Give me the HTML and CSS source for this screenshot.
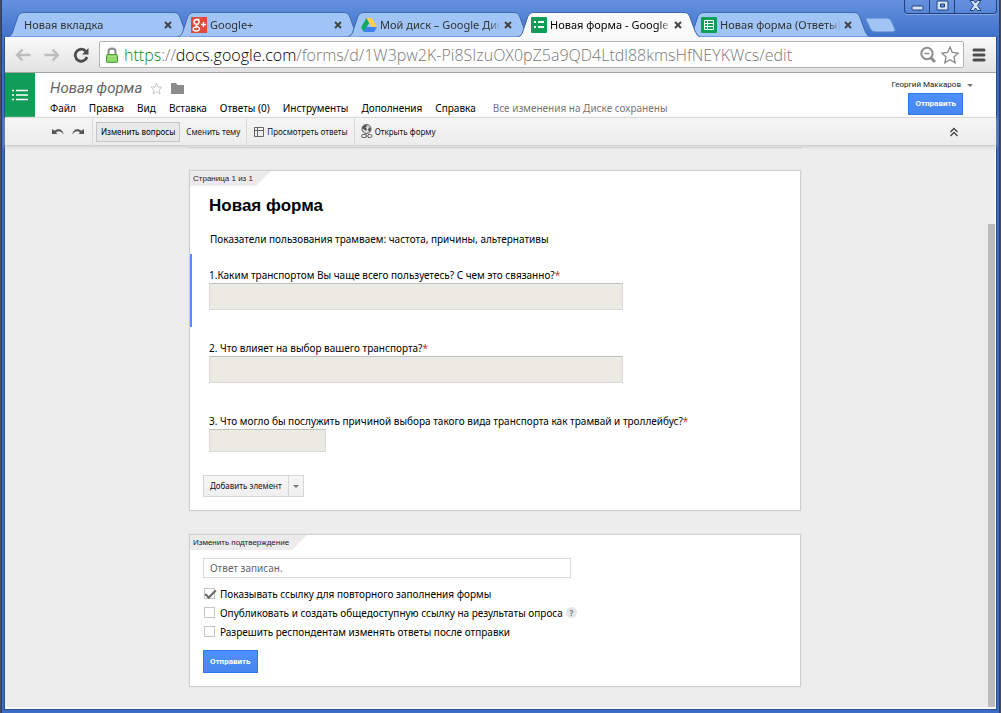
FILE: index.html
```html
<!DOCTYPE html>
<html lang="ru">
<head>
<meta charset="utf-8">
<title>Новая форма - Google Формы</title>
<link rel="stylesheet" href="styles.css">
</head>
<body>
<div class="window">
  <div class="tabstrip">
    <div class="tab tab-plain">
      <svg class="tab-shape" viewBox="0 0 182 25" preserveAspectRatio="none"><path d="M0 24.500C3 24 4 22 5 19L10 4Q11.500 .5 15 .5H167Q170 .5 171.500 4L177 19Q179 24 182 24.500"/></svg>
      <button class="tab-title">Новая вкладка</button>
      <button class="tab-close" aria-label="Закрыть"><svg viewBox="0 0 8 8"><path d="M1 1L7 7M7 1L1 7"/></svg></button>
    </div>
    <div class="tab">
      <svg class="tab-shape" viewBox="0 0 182 25" preserveAspectRatio="none"><path d="M0 24.500C3 24 4 22 5 19L10 4Q11.500 .5 15 .5H167Q170 .5 171.500 4L177 19Q179 24 182 24.500"/></svg>
      <svg class="favicon" viewBox="0 0 16 16"><rect width="16" height="16" fill="#dd4b39"/><path d="M8.500 2.500H5.800C3.800 2.500 3 3.800 3 5S4 7.300 5.700 7.300 8 6.200 8 5 7.300 2.600 6 2.600M5.500 7.500C4.700 8.300 5 8.700 6.200 9.400 8 10.400 8.700 11 8.500 12.200 8.200 13.600 6.700 14 5.200 14 3.500 14 2.200 13.400 2.200 12 2.200 10.500 4 9.800 6.300 9.900" fill="none" stroke="#fff" stroke-width="1.500"/><path d="M10 7.500H15M12.500 5V10" stroke="#fff" stroke-width="1.400"/></svg>
      <button class="tab-title">Google+</button>
      <button class="tab-close" aria-label="Закрыть"><svg viewBox="0 0 8 8"><path d="M1 1L7 7M7 1L1 7"/></svg></button>
    </div>
    <div class="tab">
      <svg class="tab-shape" viewBox="0 0 182 25" preserveAspectRatio="none"><path d="M0 24.500C3 24 4 22 5 19L10 4Q11.500 .5 15 .5H167Q170 .5 171.500 4L177 19Q179 24 182 24.500"/></svg>
      <svg class="favicon" viewBox="0 0 16 16"><path d="M5.500 1L0 10.500 2.800 15 8.200 5.700Z" fill="#11a861"/><path d="M5.500 1H10.700L16 10H10.700Z" fill="#ffcf48"/><path d="M5.300 10H16L13.200 15H2.700Z" fill="#3d82f0"/></svg>
      <button class="tab-title">Мой диск – Google Дис</button>
      <button class="tab-close" aria-label="Закрыть"><svg viewBox="0 0 8 8"><path d="M1 1L7 7M7 1L1 7"/></svg></button>
    </div>
    <div class="tab tab-active">
      <svg class="tab-shape" viewBox="0 0 182 25" preserveAspectRatio="none"><path d="M0 25C3 24 4 22 5 19L10 4Q11.500 .5 15 .5H167Q170 .5 171.500 4L177 19Q179 24 182 25"/></svg>
      <svg class="favicon" viewBox="0 0 16 16"><rect width="16" height="16" rx="1" fill="#109d58"/><path d="M3 5H5M3 10H5M7 5H13M7 10H13" stroke="#fff" stroke-width="2"/></svg>
      <button class="tab-title">Новая форма - Google</button>
      <button class="tab-close" aria-label="Закрыть"><svg viewBox="0 0 8 8"><path d="M1 1L7 7M7 1L1 7"/></svg></button>
    </div>
    <div class="tab">
      <svg class="tab-shape" viewBox="0 0 182 25" preserveAspectRatio="none"><path d="M0 24.500C3 24 4 22 5 19L10 4Q11.500 .5 15 .5H167Q170 .5 171.500 4L177 19Q179 24 182 24.500"/></svg>
      <svg class="favicon" viewBox="0 0 16 16"><rect width="16" height="16" rx="1" fill="#109d58"/><path d="M3.500 3.500H12.500V12.500H3.500ZM3.500 6.500H12.500M3.500 9.500H12.500M6.500 3.500V12.500" fill="none" stroke="#fff"/></svg>
      <button class="tab-title">Новая форма (Ответы)</button>
      <button class="tab-close" aria-label="Закрыть"><svg viewBox="0 0 8 8"><path d="M1 1L7 7M7 1L1 7"/></svg></button>
    </div>
    <button class="new-tab" aria-label="Новая вкладка"><svg viewBox="0 0 32 16"><path d="M2 1H22Q25 1 26.500 4L30 12Q31 15 28 15H10Q7 15 5.500 12L1 3Q.5 1 2 1Z" fill="#9fc4f5" stroke="#5480cb"/></svg></button>
    <div class="window-controls">
      <button aria-label="Свернуть"><svg viewBox="0 0 13 13"><rect x="1" y="6" width="11" height="4" rx="1" fill="#d4e4fb" stroke="#23407c"/></svg></button>
      <button aria-label="Развернуть"><svg viewBox="0 0 13 13"><path d="M1 1H12V10H1ZM4.500 4V7H8.500V4Z" fill="#d4e4fb" fill-rule="evenodd" stroke="#23407c"/></svg></button>
      <button class="wide" aria-label="Закрыть окно"><svg viewBox="0 0 13 13"><path d="M1 .5H4.500L6.500 3 8.500 .5H12L8.500 5.500 12 10.500H8.500L6.500 8 4.500 10.500H1L4.500 5.500Z" fill="#d4e4fb" stroke="#23407c"/></svg></button>
    </div>
  </div>

  <div class="browser">
    <div class="navbar">
      <button class="nav-button" aria-label="Назад"><svg viewBox="0 0 16 16"><path d="M1.500 8H15.500M7.500 2.500L2 8 7.500 13.500" fill="none" stroke="#bdbdbd" stroke-width="2.400"/></svg></button>
      <button class="nav-button" aria-label="Вперёд"><svg viewBox="0 0 16 16"><path d="M14.500 8H.5M8.500 2.500L14 8 8.500 13.500" fill="none" stroke="#bdbdbd" stroke-width="2.400"/></svg></button>
      <button class="nav-button" aria-label="Обновить"><svg viewBox="0 0 16 16"><path d="M13 4.500A6 6 0 1 0 14 10" fill="none" stroke="#4d4d4d" stroke-width="2.800"/><path d="M15.500 1V7.500H9Z" fill="#4d4d4d"/></svg></button>
      <div class="omnibox">
        <svg class="lock" viewBox="0 0 12 16"><path d="M2.500 8V4.500Q2.500 1.500 6 1.500T9.500 4.500V8" fill="none" stroke="#8b8b8b" stroke-width="2"/><rect x=".5" y="7.500" width="11" height="8" rx="1" fill="#8bd568" stroke="#4f9d35"/><path d="M2 9.500H10M2 12H10" stroke="#a9e48c"/></svg>
        <a class="url" href="#"><span class="url-scheme">https</span>://<span class="url-host">docs.google.com</span>/forms/d/1W3pw2K-Pi8SIzuOX0pZ5a9QD4Ltdl88kmsHfNEYKWcs/edit</a>
        <svg class="omni-icon" viewBox="0 0 18 18"><circle cx="8" cy="7.500" r="5.700" fill="none" stroke="#8e8e8e" stroke-width="2"/><path d="M5.500 7.500H10.500" stroke="#8e8e8e" stroke-width="1.500"/><path d="M12 12L16 16" stroke="#8e8e8e" stroke-width="3"/></svg>
        <svg class="omni-icon" viewBox="0 0 18 18"><path d="M9 1L11.400 6.500 17.300 7 12.900 11 14.200 16.800 9 13.700 3.800 16.800 5.100 11 .7 7 6.600 6.500Z" fill="#fff" stroke="#8a8a8a" stroke-width="1.300"/></svg>
      </div>
      <button class="nav-button" aria-label="Меню"><svg viewBox="0 0 16 16"><path d="M3 3H13M3 8H13M3 13H13" stroke="#4d4d4d" stroke-width="3" stroke-linecap="round"/></svg></button>
    </div>

    <header class="header">
      <a class="logo" href="#" aria-label="Формы"><svg viewBox="0 0 18 14"><path d="M1 2.500H3M1 7H3M1 11.500H3M5 2.500H17M5 7H17M5 11.500H17" stroke="#fff" stroke-width="1.300"/></svg></a>
      <div class="heading">
        <div class="title-row">
          <h1 class="doc-title">Новая форма</h1>
          <svg class="title-icon" viewBox="0 0 13 13"><path d="M6.500 1L8 5 12 5.200 9 7.800 10 12 6.500 9.600 3 12 4 7.800 1 5.200 5 5Z" fill="none" stroke="#c9c9c9"/></svg>
          <svg class="title-icon" viewBox="0 0 13 13"><path d="M0 1H5L6.500 3H13V12H0Z" fill="#8b8b8b"/></svg>
        </div>
        <nav class="menu">
          <button>Файл</button><button>Правка</button><button>Вид</button><button>Вставка</button><button>Ответы (0)</button><button>Инструменты</button><button>Дополнения</button><button>Справка</button><span class="saved">Все изменения на Диске сохранены</span>
        </nav>
      </div>
      <div class="account">
        <button class="user">Георгий Маккаров <span class="caret"></span></button>
        <button class="primary">Отправить</button>
      </div>
    </header>

    <div class="toolbar">
      <div class="tool-group history">
        <button class="tool" aria-label="Отменить"><svg viewBox="0 0 12 10"><path d="M0 2V7H5.500L4 5.500C6 3.500 9.500 4 11.500 7.500 11.500 2.500 6 .5 2.500 3.800Z" fill="#555"/></svg></button>
        <button class="tool" aria-label="Повторить"><svg viewBox="0 0 12 10"><path d="M12 2V7H6.500L8 5.500C6 3.500 2.500 4 .5 7.500 .5 2.500 6 .5 9.500 3.800Z" fill="#555"/></svg></button>
      </div>
      <div class="tool-group modes">
        <button class="tool pressed">Изменить вопросы</button>
        <button class="tool theme">Сменить тему</button>
      </div>
      <div class="tool-group">
        <button class="tool with-icon"><svg viewBox="0 0 12 12"><path d="M1.500 1.500H10.500V10.500H1.500ZM1.500 4.500H10.500M4.500 1.500V10.500" fill="none" stroke="#666"/></svg>Просмотреть ответы</button>
      </div>
      <div class="tool-group">
        <button class="tool with-icon"><svg class="tall" viewBox="0 0 12 15"><circle cx="5.500" cy="5" r="4.500" fill="#ddd" stroke="#555"/><path d="M2 2Q5 0 6.500 2L4.500 3.500 6 5 5 7 3 5.500 1 4ZM8 3L10 5 8.500 8 7 6Z" fill="#555"/><path d="M2 10.500H4.500Q6 10.500 6 12T4.500 13.500H2Q.5 13.500 .5 12T2 10.500ZM7 10.500H9.500Q11 10.500 11 12T9.500 13.500H7M4 12H8" fill="none" stroke="#666"/></svg>Открыть форму</button>
      </div>
      <button class="collapse" aria-label="Скрыть меню"><svg viewBox="0 0 10 10"><path d="M1.500 5L5 1.500 8.500 5M1.500 9L5 5.500 8.500 9" fill="none" stroke="#444" stroke-width="1.300"/></svg></button>
    </div>

    <div class="page">
      <main class="content">
        <div class="card card-above"></div>
        <section class="card">
          <div class="tag">Страница 1 из 1</div>
          <h2 class="form-title">Новая форма</h2>
          <p class="description">Показатели пользования трамваем: частота, причины, альтернативы</p>
          <div class="question selected">
            <label for="q1">1.Каким транспортом Вы чаще всего пользуетесь? С чем это связанно?<span class="required">*</span></label>
            <input class="answer" id="q1" type="text" disabled>
          </div>
          <div class="question">
            <label for="q2">2. Что влияет на выбор вашего транспорта?<span class="required">*</span></label>
            <input class="answer" id="q2" type="text" disabled>
          </div>
          <div class="question">
            <label for="q3">3. Что могло бы послужить причиной выбора такого вида транспорта как трамвай и троллейбус?<span class="required">*</span></label>
            <input class="answer short" id="q3" type="text" disabled>
          </div>
          <div class="add">
            <button class="add-main">Добавить элемент</button><button class="add-more" aria-label="Другие элементы"><span class="caret"></span></button>
          </div>
        </section>

        <section class="card confirm">
          <div class="tag">Изменить подтверждение</div>
          <div class="confirm-body">
            <input class="message" type="text" value="Ответ записан." aria-label="Текст подтверждения">
            <label class="option"><input type="checkbox" checked>Показывать ссылку для повторного заполнения формы</label>
            <div class="option-row"><label class="option"><input type="checkbox">Опубликовать и создать общедоступную ссылку на результаты опроса</label><button class="help">?</button></div>
            <label class="option"><input type="checkbox">Разрешить респондентам изменять ответы после отправки</label>
            <button class="primary send">Отправить</button>
          </div>
        </section>
      </main>
      <div class="scrollbar"><div class="thumb"></div></div>
    </div>
  </div>
</div>
</body>
</html>
```
FILE: styles.css
```css
* { box-sizing: border-box; }

body {
  margin: 0;
  font-family: "Noto Sans", sans-serif;
  font-size: 10px;
  line-height: 14px;
  color: #000;
}

h1, h2, p { margin: 0; font-weight: normal; }

button {
  margin: 0;
  padding: 0;
  border: 0;
  background: none;
  font: inherit;
  color: inherit;
  white-space: nowrap;
}

svg { display: block; flex: none; }

.window {
  display: flex;
  flex-direction: column;
  min-height: 100vh;
  padding: 0 3px 3px;
  border: 1px solid #484c58;
  border-top: 0;
  background: linear-gradient(#6592df 0, #4273cb 36px, #3d6cc2 60px);
  box-shadow: inset 1px 0 #23407c, inset -1px 0 #23407c;
}

/* Browser tabs */
.tabstrip {
  display: flex;
  padding-left: 4px;
}

.tab {
  position: relative;
  display: flex;
  align-items: center;
  flex: 0 1 182px;
  min-width: 0;
  height: 25px;
  margin: 12px -12px 0 0;
  padding: 0 18px 0 13px;
}

.tab-plain { padding-left: 16px; }

.tab-active { z-index: 1; }

.tab-shape {
  position: absolute;
  inset: 0;
  width: 100%;
  height: 100%;
  fill: #9fc4f5;
  stroke: #3f69ae;
}

.tab-active .tab-shape { fill: #fafafa; }

.favicon {
  position: relative;
  width: 16px;
  height: 16px;
  margin-right: 3px;
}

.tab-title {
  position: relative;
  flex: 1;
  min-width: 0;
  overflow: hidden;
  text-align: left;
  font-family: "Noto Sans", sans-serif;
  font-size: 11px;
  line-height: 16px;
  color: #333;
  mask-image: linear-gradient(to left, transparent, #000 12px);
}

.tab-active .tab-title { color: #000; }

.tab-close {
  position: relative;
  margin-left: 3px;
}

.tab-close svg {
  width: 8px;
  height: 8px;
  stroke: #444;
  stroke-width: 2;
}

.new-tab {
  align-self: flex-start;
  margin: 17px 0 0 7px;
}

.new-tab svg { width: 32px; height: 16px; }

.window-controls {
  display: flex;
  align-self: flex-start;
  margin-left: auto;
  height: 14px;
  border: 1px solid #23407c;
  border-top: 0;
  border-radius: 0 0 4px 4px;
  box-shadow: 0 1px #82a7e8;
}

.window-controls button {
  display: flex;
  justify-content: center;
  width: 25px;
  border-right: 1px solid #23407c;
}

.window-controls .wide { width: 41px; border: 0; }
.window-controls svg { width: 13px; height: 13px; }

/* Address bar */
.browser {
  display: flex;
  flex-direction: column;
  flex: 1;
  border: 1px solid #2b4f95;
  border-top: 0;
}

.navbar {
  display: flex;
  align-items: center;
  gap: 13px;
  height: 36px;
  padding: 0 9px 0 10px;
  border-bottom: 1px solid #a3a3a3;
  background: linear-gradient(#fafafa, #e2e2e2);
}

.nav-button svg { width: 16px; height: 16px; }

.omnibox {
  display: flex;
  align-items: center;
  gap: 4px;
  flex: 1;
  min-width: 0;
  height: 27px;
  margin: 0 -6px 0 -3px;
  padding: 0 4px 0 6px;
  border: 1px solid #b3b3b3;
  border-radius: 2px;
  background: #fff;
}

.lock { width: 12px; height: 16px; }

.url {
  flex: 1;
  min-width: 0;
  overflow: hidden;
  margin-left: 2px;
  font-family: "Open Sans", sans-serif;
  font-weight: 300;
  font-size: 16px;
  line-height: 24px;
  white-space: nowrap;
  text-decoration: none;
  color: #777;
}

.url-scheme { color: #0a8a0a; }
.url-host { color: #000; }
.omni-icon { width: 18px; height: 18px; }

/* Document header */
.header {
  display: flex;
  background: #fff;
}

.logo {
  display: flex;
  align-items: center;
  justify-content: center;
  width: 30px;
  background: #109d58;
}

.logo svg { width: 18px; height: 14px; }

.heading {
  flex: 1;
  padding: 6px 0 2px 15px;
}

.title-row {
  display: flex;
  align-items: center;
  gap: 8px;
  height: 18px;
}

.doc-title {
  font-family: Roboto, sans-serif;
  font-size: 15px;
  line-height: 18px;
  font-style: italic;
  color: #666;
}

.title-icon { width: 13px; height: 13px; }

.menu {
  display: flex;
  gap: 13px;
  height: 18px;
  align-items: flex-end;
}

.saved { margin-left: 4px; color: #777; }

.account {
  display: flex;
  flex-direction: column;
  align-items: flex-end;
  gap: 1px;
  padding: 5px 23px 2px 0;
}

.user {
  display: flex;
  align-items: center;
  gap: 6px;
  font-family: Roboto, sans-serif;
  font-size: 8px;
  color: #222;
}

.caret {
  border: 3px solid transparent;
  border-top-color: #777;
  border-bottom: 0;
}

.primary {
  height: 22px;
  margin-right: 10px;
  padding: 0 6px;
  border: 1px solid #3079ed;
  background: linear-gradient(#4d90fe, #4787ed);
  font-family: Roboto, sans-serif;
  font-size: 8px;
  font-weight: bold;
  color: #fff;
}

/* Form toolbar */
.toolbar {
  position: relative;
  display: flex;
  height: 29px;
  border-top: 1px solid #dadada;
  border-bottom: 1px solid #d2d2d2;
  background: linear-gradient(#f5f5f5, #ececec);
  box-shadow: 0 1px 3px #d0d0d0;
  font-size: 8px;
  color: #111;
}

.tool-group {
  display: flex;
  align-items: center;
  border-right: 1px solid #d9d9d9;
}

.tool-group:nth-of-type(4) { border-right: 0; }

.history {
  gap: 8px;
  padding: 0 8px 0 47px;
}

.history svg { width: 12px; height: 10px; }

.modes { padding-left: 3px; }

.tool { height: 20px; }

.pressed {
  padding: 0 4px;
  border: 1px solid #c6c6c6;
  background: #e8e8e8;
  color: #000;
}

.theme { padding: 0 6px; }

.with-icon {
  display: flex;
  align-items: center;
  gap: 2px;
  padding: 0 6px;
}

.with-icon svg { width: 12px; height: 12px; }
.with-icon .tall { height: 15px; }

.collapse { margin: 0 37px 0 auto; }
.collapse svg { width: 10px; height: 10px; }

/* Form editor */
.page {
  display: flex;
  flex: 1;
  border-right: 1px solid #f8f8f8;
  border-bottom: 2px solid #f8f8f8;
  background: #ededed;
}

.content {
  flex: 1;
  padding: 0 3px 20px 0;
}

.scrollbar {
  display: flex;
  width: 7px;
  padding-top: 78px;
}

.thumb { flex: 1; background: #bcbcbc; }

.card {
  max-width: 612px;
  margin: 0 auto 23px;
  border: 1px solid #cfcfcf;
  background: #fff;
  box-shadow: 0 0 2px #dcdcdc;
}

.card-above {
  height: 2px;
  margin-bottom: 22px;
  border-top: 0;
}

.confirm { margin-bottom: 0; }

.tag {
  width: fit-content;
  height: 15px;
  padding: 0 18px 0 3px;
  background: #ebebeb;
  clip-path: polygon(0 0, 100% 0, calc(100% - 15px) 100%, 0 100%);
  font-family: "Liberation Sans", Arial, sans-serif;
  font-size: 8px;
  line-height: 16px;
  color: #222;
}

.form-title {
  margin-top: 10px;
  padding: 0 19px;
  font-family: "Liberation Sans", Arial, sans-serif;
  font-size: 17px;
  line-height: 20px;
  font-weight: bold;
}

.description {
  padding: 16px 20px 8px;
}

.question {
  min-height: 73px;
  padding: 14px 19px 0 17px;
  border-left: 2px solid transparent;
}

.selected { border-left-color: #4d90fe; }

.question label { display: block; line-height: 15px; }

.required { color: #c43b1d; }

.answer {
  display: block;
  width: 100%;
  max-width: 414px;
  height: 27px;
  border: 1px solid #d9d9d9;
  border-top-color: #c0c0c0;
  background: #ebebe4;
}

.short { max-width: 117px; height: 23px; }

.add {
  display: flex;
  width: fit-content;
  height: 22px;
  margin: 2px 13px 13px;
  border: 1px solid #d6d6d6;
  background: linear-gradient(#f6f6f6, #efefef);
  font-size: 8px;
  color: #111;
}

.add-main { padding: 0 6px; }

.add-more {
  display: flex;
  align-items: center;
  justify-content: center;
  width: 15px;
  border-left: 1px solid #d6d6d6;
}

.confirm-body {
  display: flex;
  flex-direction: column;
  align-items: flex-start;
  padding: 8px 13px 13px;
}

.message {
  width: 100%;
  max-width: 368px;
  height: 20px;
  margin-bottom: 6px;
  padding: 0 6px;
  border: 1px solid #d9d9d9;
  font: inherit;
  color: #666;
}

.option, .option-row {
  display: flex;
  align-items: center;
  height: 19px;
}

.option input {
  appearance: none;
  width: 11px;
  height: 11px;
  margin: 0 5px 0 1px;
  border: 1px solid #c6c6c6;
  background: #fff;
}

.option input:checked::before {
  content: "";
  display: block;
  width: 9px;
  height: 4px;
  margin-top: 1px;
  border: solid #666;
  border-width: 0 0 2px 2px;
  transform: rotate(-45deg);
}

.help {
  width: 11px;
  height: 11px;
  margin-left: 3px;
  border-radius: 50%;
  background: #e6e6e6;
  font-size: 8px;
  font-weight: bold;
  line-height: 11px;
  color: #777;
}

.send { height: 23px; margin-top: 9px; }
```
